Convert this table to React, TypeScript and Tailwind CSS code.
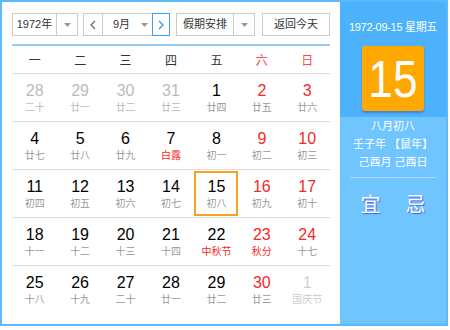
type Day = { d: number; l: string; kind?: "prev" | "next"; fest?: boolean; sel?: boolean };

const weeks: Day[][] = [
  [
    { d: 28, l: "二十", kind: "prev" },
    { d: 29, l: "廿一", kind: "prev" },
    { d: 30, l: "廿二", kind: "prev" },
    { d: 31, l: "廿三", kind: "prev" },
    { d: 1, l: "廿四" },
    { d: 2, l: "廿五" },
    { d: 3, l: "廿六" },
  ],
  [
    { d: 4, l: "廿七" },
    { d: 5, l: "廿八" },
    { d: 6, l: "廿九" },
    { d: 7, l: "白露", fest: true },
    { d: 8, l: "初一" },
    { d: 9, l: "初二" },
    { d: 10, l: "初三" },
  ],
  [
    { d: 11, l: "初四" },
    { d: 12, l: "初五" },
    { d: 13, l: "初六" },
    { d: 14, l: "初七" },
    { d: 15, l: "初八", sel: true },
    { d: 16, l: "初九" },
    { d: 17, l: "初十" },
  ],
  [
    { d: 18, l: "十一" },
    { d: 19, l: "十二" },
    { d: 20, l: "十三" },
    { d: 21, l: "十四" },
    { d: 22, l: "中秋节", fest: true },
    { d: 23, l: "秋分", fest: true },
    { d: 24, l: "十七" },
  ],
  [
    { d: 25, l: "十八" },
    { d: 26, l: "十九" },
    { d: 27, l: "二十" },
    { d: 28, l: "廿一" },
    { d: 29, l: "廿二" },
    { d: 30, l: "廿三" },
    { d: 1, l: "国庆节", kind: "next" },
  ],
];

const weekdays = ["一", "二", "三", "四", "五", "六", "日"];

function Caret() {
  return (
    <svg width="7" height="4" viewBox="0 0 7 4">
      <path d="M0 0h7L3.5 4z" fill="#999" />
    </svg>
  );
}

function Chevron({ dir, color }: { dir: "l" | "r"; color: string }) {
  return (
    <svg width="6" height="10" viewBox="0 0 6 10">
      <polyline
        points={dir === "l" ? "5,1 1,5 5,9" : "1,1 5,5 1,9"}
        fill="none"
        stroke={color}
        strokeWidth="1.2"
      />
    </svg>
  );
}

function Cell({ day, col }: { day: Day; col: number }) {
  const weekend = col >= 5;
  let num = "text-black";
  let lun = "text-[#999]";
  if (day.kind === "prev") {
    num = "text-[#bbb]";
    lun = "text-[#bbb]";
  } else if (day.kind === "next") {
    num = "text-[#c9d3dc]";
    lun = "text-[#ccc]";
  } else if (weekend) {
    num = "text-[#f42a2a]";
  }
  if (day.fest) lun = "text-[#f42a2a]";
  return (
    <div className="flex justify-center">
      <div
        className={`w-[44px] h-[45px] my-[1px] border-2 flex flex-col items-center pt-[5px] ${
          day.sel ? "border-[#f8a31d]" : "border-transparent"
        }`}
      >
        <span className={`text-[16px] leading-[18px] ${num}`}>{day.d}</span>
        <span className={`text-[10px] leading-[16px] ${lun}`}>{day.l}</span>
      </div>
    </div>
  );
}

export default function App() {
  return (
    <div
      className="w-[450px] h-[330px] bg-white"
      style={{ fontFamily: '"Liberation Sans", "Noto Sans CJK SC", sans-serif' }}
    >
      <div className="flex w-[448px] h-[326px] border-2 border-[#5db8fc]">
        <div className="w-[338px] px-[10px] pt-[11px]">
          <div className="flex h-[23px] text-[11px] text-[#333]">
            <div className="flex w-[66px] border border-[#ccc]">
              <div className="flex-1 flex items-center justify-center">1972年</div>
              <div className="w-[21px] border-l border-[#ccc] flex items-center justify-center">
                <Caret />
              </div>
            </div>
            <div className="flex ml-[5px] w-[87px]">
              <div className="w-[20px] border border-[#ccc] flex items-center justify-center">
                <Chevron dir="l" color="#666" />
              </div>
              <div className="flex w-[49px] border-y border-[#ccc]">
                <div className="flex-1 flex items-center justify-center pl-[4px]">9月</div>
                <div className="w-[16px] flex items-center justify-center">
                  <Caret />
                </div>
              </div>
              <div className="w-[18px] border border-[#3d9ef5] flex items-center justify-center">
                <Chevron dir="r" color="#2d8ff0" />
              </div>
            </div>
            <div className="flex ml-[6px] w-[79px] border border-[#ccc]">
              <div className="flex-1 flex items-center justify-center">假期安排</div>
              <div className="w-[21px] border-l border-[#ccc] flex items-center justify-center">
                <Caret />
              </div>
            </div>
            <div className="ml-[7px] w-[68px] border border-[#ccc] flex items-center justify-center">
              返回今天
            </div>
          </div>
          <div className="mt-[8px] h-[2px] bg-[#93cdf7]" />
          <div className="grid grid-cols-7 h-[28px] pt-[2px] border-b border-[#ddd] text-[12px]">
            {weekdays.map((w, i) => (
              <div
                key={w}
                className={`flex items-center justify-center ${i >= 5 ? "text-[#f54b4b]" : "text-[#333]"}`}
              >
                {w}
              </div>
            ))}
          </div>
          {weeks.map((week, r) => (
            <div
              key={r}
              className={`grid grid-cols-7 ${r < weeks.length - 1 ? "border-b border-[#ddd]" : ""}`}
            >
              {week.map((day, c) => (
                <Cell key={c} day={day} col={c} />
              ))}
            </div>
          ))}
        </div>
        <div className="flex-1 flex flex-col text-white">
          <div className="h-[115px] bg-[#4cb2fb] flex flex-col items-center">
            <div className="mt-[18px] text-[11px] leading-[14px] tracking-[-0.3px]">1972-09-15 星期五</div>
            <div className="mt-[12px] w-[62px] h-[65px] rounded-[3px] bg-[#ffa800] shadow-[0_2px_2px_rgba(80,60,160,0.45)] flex items-center justify-center">
              <span className="text-[52px] leading-none scale-x-[0.85]">15</span>
            </div>
          </div>
          <div className="flex-1 bg-[#70c5ff] flex flex-col items-center">
            <div className="text-[11px] leading-[18px] text-center">
              <div>八月初八</div>
              <div>壬子年 【鼠年】</div>
              <div>己酉月 己酉日</div>
            </div>
            <div className="mt-[6px] self-stretch mx-[10px] h-[1px] bg-[#a8dcff]" />
            <div className="mt-[16px] flex gap-[25px] text-[20px] leading-[22px] [text-shadow:1px_1px_1px_#5560d8]">
              <span>宜</span>
              <span>忌</span>
            </div>
          </div>
        </div>
      </div>
    </div>
  );
}
